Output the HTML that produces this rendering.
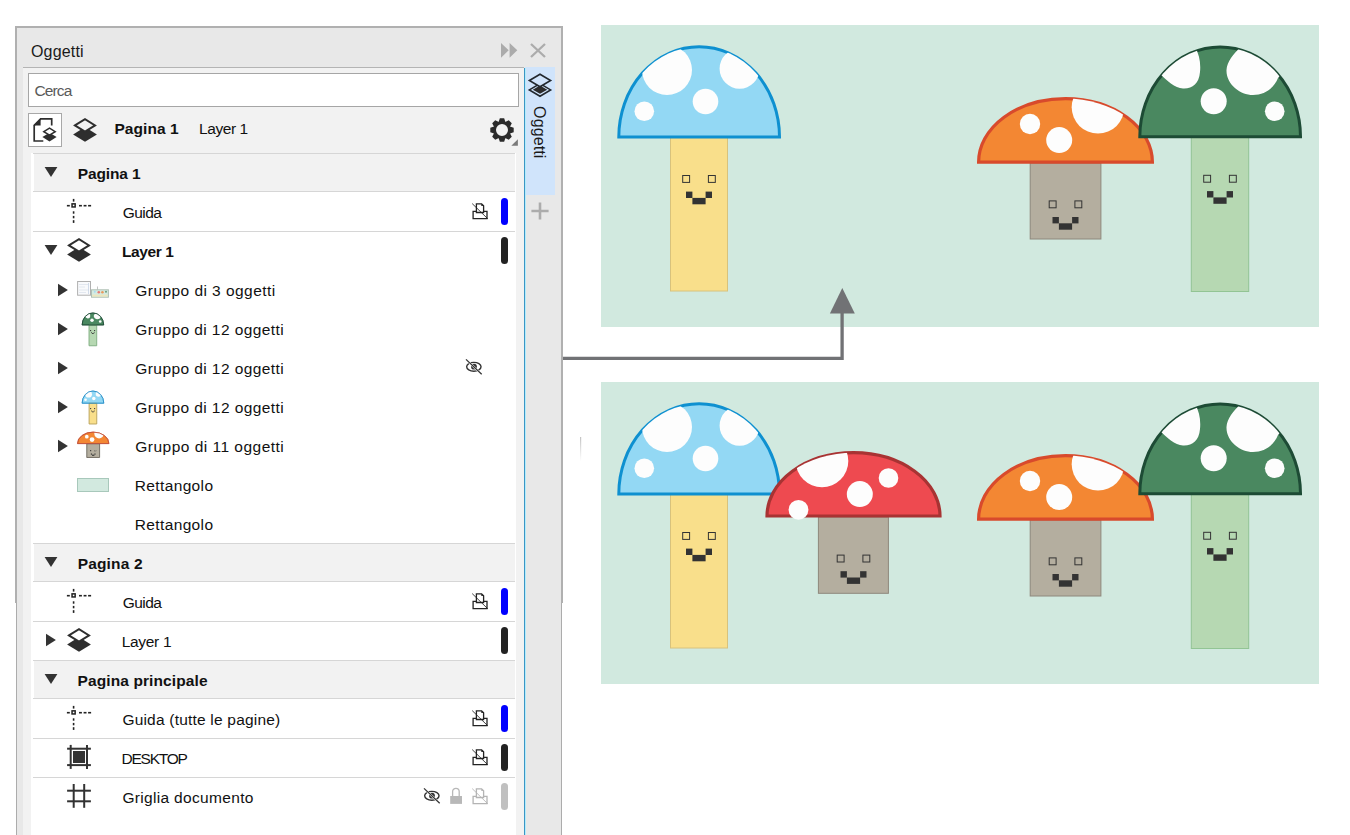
<!DOCTYPE html>
<html><head><meta charset="utf-8"><style>
html,body{margin:0;padding:0}
body{width:1350px;height:835px;position:relative;overflow:hidden;background:#fff;font-family:'Liberation Sans', sans-serif}
</style></head><body>
<svg width="1350" height="835" viewBox="0 0 1350 835" style="position:absolute;left:0;top:0">
<defs><clipPath id="cb"><path d="M618.80 136.90 A80.35 90.30 0 0 1 779.50 136.90 Z"/></clipPath>
<clipPath id="cg"><path d="M1139.80 136.70 A80.35 89.80 0 0 1 1300.50 136.70 Z"/></clipPath>
<clipPath id="co"><path d="M978.60 162.20 A86.90 63.60 0 0 1 1152.40 162.20 Z"/></clipPath>
<clipPath id="cr"><path d="M767.00 516.00 A86.50 63.30 0 0 1 940.00 516.00 Z"/></clipPath></defs>
<rect x="601" y="25" width="718" height="302" fill="#d1e9df"/>
<rect x="601" y="382" width="718" height="302" fill="#d1e9df"/>
<g id="mb"><rect x="670.5" y="137.5" width="57" height="153.5" fill="#f9df8b" stroke="#d8c27c" stroke-width="1"/>
<path d="M618.80 136.90 A80.35 90.30 0 0 1 779.50 136.90 Z" fill="#93d8f4" stroke="#0e90d0" stroke-width="3.0"/>
<g clip-path="url(#cb)" fill="#fdfdfd"><circle cx="667" cy="70" r="25"/><circle cx="739.6" cy="68.7" r="20"/></g>
<g fill="#fdfdfd"><circle cx="705.5" cy="101.5" r="12.8"/><circle cx="644.3" cy="111.2" r="9.8"/></g>
<g fill="none" stroke="#333" stroke-width="1"><rect x="682.7" y="175.5" width="6.9" height="6.9"/><rect x="708.4" y="175.5" width="6.9" height="6.9"/></g><g fill="#333"><rect x="686.0" y="191.6" width="6.4" height="6.4"/><rect x="705.6" y="191.6" width="6.4" height="6.4"/><rect x="692.4" y="197.9" width="13.2" height="6.4"/></g></g>
<g id="mo"><rect x="1030.2" y="163" width="70.7" height="76" fill="#b4ae9f" stroke="#8e887c" stroke-width="1"/>
<path d="M978.60 162.20 A86.90 63.60 0 0 1 1152.40 162.20 Z" fill="#f38733" stroke="#d84a2c" stroke-width="3.2"/>
<g clip-path="url(#co)" fill="#fdfdfd"><circle cx="1098" cy="107.3" r="26.3"/></g>
<g fill="#fdfdfd"><circle cx="1030" cy="124" r="10.2"/><circle cx="1059.2" cy="140.1" r="13"/></g>
<g fill="none" stroke="#333" stroke-width="1"><rect x="1049.2" y="200.9" width="6.9" height="6.9"/><rect x="1074.9" y="200.9" width="6.9" height="6.9"/></g><g fill="#333"><rect x="1052.5" y="217.0" width="6.4" height="6.4"/><rect x="1072.1" y="217.0" width="6.4" height="6.4"/><rect x="1058.9" y="223.3" width="13.2" height="6.4"/></g></g>
<g id="mg"><rect x="1191.3" y="137.5" width="57.4" height="154" fill="#b6d8b2" stroke="#92c494" stroke-width="1"/>
<path d="M1139.80 136.70 A80.35 89.80 0 0 1 1300.50 136.70 Z" fill="#4a8860" stroke="#1d4b35" stroke-width="3.0"/>
<g clip-path="url(#cg)" fill="#fdfdfd"><path d="M1193 44 C1199 52 1201 62 1200 72 C1199 84 1192 89 1183 88.5 C1175 88 1167 81 1158 72 L1170 44 Z"/><path d="M1243 44 C1236 52 1227 60 1226.5 70 C1226 84 1240 95 1253 95 C1265 95 1274 88 1278 78 L1285 70 L1250 40 Z"/></g>
<g fill="#fdfdfd"><circle cx="1213.7" cy="101.3" r="13"/><circle cx="1274.7" cy="111.2" r="9.8"/></g>
<g fill="none" stroke="#333" stroke-width="1"><rect x="1203.7" y="175.3" width="6.9" height="6.9"/><rect x="1229.4" y="175.3" width="6.9" height="6.9"/></g><g fill="#333"><rect x="1207.0" y="191.1" width="6.4" height="6.4"/><rect x="1226.6" y="191.1" width="6.4" height="6.4"/><rect x="1213.4" y="197.4" width="13.2" height="6.4"/></g></g>
<g transform="translate(0,357)"><use href="#mb"/><use href="#mo"/><use href="#mg"/></g>
<g id="mr"><rect x="818.4" y="517" width="70" height="76.3" fill="#b4ae9f" stroke="#8e887c" stroke-width="1"/>
<path d="M767.00 516.00 A86.50 63.30 0 0 1 940.00 516.00 Z" fill="#ee4a50" stroke="#a83333" stroke-width="3.2"/>
<g clip-path="url(#cr)" fill="#fdfdfd"><circle cx="822" cy="461" r="26.3"/></g>
<g fill="#fdfdfd"><circle cx="888.5" cy="478" r="9.8"/><circle cx="859.8" cy="494.1" r="13"/><circle cx="798.5" cy="509.8" r="9.9"/></g>
<g fill="none" stroke="#333" stroke-width="1"><rect x="837.2" y="555.1" width="6.9" height="6.9"/><rect x="862.9" y="555.1" width="6.9" height="6.9"/></g><g fill="#333"><rect x="840.5" y="571.2" width="6.4" height="6.4"/><rect x="860.1" y="571.2" width="6.4" height="6.4"/><rect x="846.9" y="577.5" width="13.2" height="6.4"/></g></g>
<path d="M562 358.4 H842.1 V312" fill="none" stroke="#717275" stroke-width="3.3"/>
<path d="M829.9 313.5 L842.3 288 L854.8 313.5 Z" fill="#717275"/>
<defs><linearGradient id="fl" x1="0" y1="0" x2="0" y2="1"><stop offset="0" stop-color="#c4c4c4"/><stop offset="1" stop-color="#ffffff"/></linearGradient></defs><rect x="580" y="437" width="1.2" height="24" fill="url(#fl)"/>
</svg>
<div style="position:absolute;left:15px;top:26px;width:548px;height:577px;box-sizing:border-box;border:2px solid #b0b0b0;border-bottom:none;background:#e8e8e8"></div><div style="position:absolute;left:16px;top:603px;width:546px;height:232px;box-sizing:border-box;border-left:1px solid #acacac;border-right:1px solid #acacac;background:#e8e8e8"></div><div style="position:absolute;left:31.0px;top:43.66px;font:400 16px/16px 'Liberation Sans', sans-serif;letter-spacing:0.161px;color:#1a1a1a;white-space:nowrap">Oggetti</div><svg style="position:absolute;left:498px;top:38px" width="52" height="24" viewBox="498 38 52 24">
<path d="M501 42.9 L508.7 50.3 L501 57.8 Z M509.6 42.9 L517.3 50.3 L509.6 57.8 Z" fill="#ababab"/>
<path d="M531 44 L545 57 M545 44 L531 57" stroke="#acacac" stroke-width="2.3"/></svg><div style="position:absolute;left:23px;top:67px;width:501px;height:768px;background:#f2f2f2;border-top:1px solid #b4b4b4"></div><div style="position:absolute;left:28px;top:73px;width:491px;height:34px;box-sizing:border-box;background:#fff;border:1px solid #a6a6a6"></div><div style="position:absolute;left:34.4px;top:82.78px;font:400 15.5px/15.5px 'Liberation Sans', sans-serif;letter-spacing:-0.856px;color:#5a5a5a;white-space:nowrap">Cerca</div><div style="position:absolute;left:28px;top:113px;width:34px;height:34px;box-sizing:border-box;background:#fff;border:1px solid #a8a8a8"></div><svg style="position:absolute;left:28px;top:113px" width="72" height="34" viewBox="28 113 72 34">
<path d="M51.7 125.6 V118.9 H40.6 L34.2 125.3 V141 H43.3" fill="none" stroke="#2e2e2e" stroke-width="1.7"/>
<path d="M40.6 118.4 L40.6 125.6 L33.5 125.6 Z" fill="#2b2b2b"/>
<path d="M42.4 137.1 L49.5 132.7 L56.6 137.1 L49.5 141.5 Z" fill="#2e2e2e"/>
<path d="M43.8 131.7 L49.5 128.2 L55.2 131.7 L49.5 135.2 Z" fill="#fff" stroke="#2e2e2e" stroke-width="1.5" stroke-miterlimit="10"/>
<path d="M73.10 134.40 L85.00 127.10 L96.90 134.40 L85.00 141.70 Z" fill="#2e2e2e"/><path d="M74.90 125.40 L85.00 119.20 L95.10 125.40 L85.00 131.60 Z" fill="#f2f2f2" stroke="#2e2e2e" stroke-width="1.9" stroke-linejoin="miter" stroke-miterlimit="10"/>
</svg><div style="position:absolute;left:114.4px;top:121.18px;font:700 15.5px/15.5px 'Liberation Sans', sans-serif;letter-spacing:0.082px;color:#111;white-space:nowrap">Pagina 1</div><div style="position:absolute;left:199.1px;top:121.18px;font:400 15.5px/15.5px 'Liberation Sans', sans-serif;letter-spacing:-0.447px;color:#111;white-space:nowrap">Layer 1</div><svg style="position:absolute;left:484px;top:112px" width="36" height="36" viewBox="484 112 36 36">
<path d="M498.60 122.10 L499.85 118.30 L504.15 118.30 L505.40 122.10 L505.18 122.01 L508.76 120.20 L511.80 123.24 L509.99 126.82 L509.90 126.60 L513.70 127.85 L513.70 132.15 L509.90 133.40 L509.99 133.18 L511.80 136.76 L508.76 139.80 L505.18 137.99 L505.40 137.90 L504.15 141.70 L499.85 141.70 L498.60 137.90 L498.82 137.99 L495.24 139.80 L492.20 136.76 L494.01 133.18 L494.10 133.40 L490.30 132.15 L490.30 127.85 L494.10 126.60 L494.01 126.82 L492.20 123.24 L495.24 120.20 L498.82 122.01 Z M508 130 A6 6 0 1 0 496 130 A6 6 0 1 0 508 130 Z" fill="#2b2b2b" fill-rule="evenodd"/>
<path d="M511.3 145.7 L517.9 139.3 L517.9 145.7 Z" fill="#7a7a7a"/>
</svg><div style="position:absolute;left:31px;top:153px;width:485px;height:682px;background:#fff"></div><div style="position:absolute;left:524px;top:68px;width:1px;height:767px;background:#3b95c4"></div><div style="position:absolute;left:525px;top:67px;width:30px;height:128px;background:#d0e4fb"></div><div style="position:absolute;left:525px;top:68px;width:1px;height:767px;background:#b4ecfb"></div><svg style="position:absolute;left:525px;top:67px" width="30" height="40" viewBox="525 67 30 40">
<path d="M529.4 89.9 L540 83.6 L550.6 89.9 L540 96.2 Z" fill="#d0e4fb" stroke="#22282e" stroke-width="1.6"/>
<path d="M532.8 89.7 L540 85.6 L547.2 89.7 L540 93.8 Z" fill="#2b2b2b"/>
<path d="M529.4 80.5 L540 74.2 L550.6 80.5 L540 86.8 Z" fill="#d0e4fb" stroke="#22282e" stroke-width="1.6"/>
</svg><div style="position:absolute;left:529px;top:106.5px;width:52px;height:17px;transform-origin:0 0;transform:translate(18.8px,-0.9px) rotate(90deg);font:400 16px/17px 'Liberation Sans', sans-serif;letter-spacing:0.1px;color:#1a1a1a;white-space:nowrap">Oggetti</div><svg style="position:absolute;left:530px;top:201px" width="20" height="20" viewBox="530 201 20 20"><path d="M531.4 211 H548.6 M540 202.4 V219.6" stroke="#acacac" stroke-width="2.6"/></svg><div style="position:absolute;left:33px;top:153px;width:482px;height:1px;background:#d6d6d6"></div><div style="position:absolute;left:34px;top:154px;width:481px;height:37px;background:#f2f2f2"></div><svg style="position:absolute;left:42.5px;top:164.3px" width="16" height="16" viewBox="42.5 164.3 16 16"><path d="M44.1 167.3 L56.9 167.3 L50.5 177.3 Z" fill="#333"/></svg><div style="position:absolute;left:77.7px;top:165.78px;font:700 15.5px/15.5px 'Liberation Sans', sans-serif;letter-spacing:-0.133px;color:#111;white-space:nowrap">Pagina 1</div><div style="position:absolute;left:33px;top:191px;width:482px;height:1px;background:#d6d6d6"></div><svg style="position:absolute;left:60px;top:192px" width="40" height="38" viewBox="60 192 40 38">
<g fill="#222"><rect x="72.8" y="198.9" width="1.6" height="2.7"/><rect x="72.8" y="211.3" width="1.6" height="2.4"/><rect x="72.8" y="215.9" width="1.6" height="2.4"/><rect x="72.8" y="220.2" width="1.6" height="2.7"/><rect x="66.9" y="204.9" width="2.9" height="1.6"/><rect x="79" y="204.9" width="2.9" height="1.6"/><rect x="83.6" y="204.9" width="2.9" height="1.6"/><rect x="88.1" y="204.9" width="3.0" height="1.6"/></g>
<rect x="72.05" y="203.85" width="3.1" height="3.1" fill="#fff" stroke="#222" stroke-width="1.5"/>
</svg><div style="position:absolute;left:122.7px;top:204.78px;font:400 15.5px/15.5px 'Liberation Sans', sans-serif;letter-spacing:-0.535px;color:#111;white-space:nowrap">Guida</div><svg style="position:absolute;left:468px;top:192px" width="24" height="38" viewBox="468 192 24 38">
<g fill="none" stroke="#222" stroke-width="1.3" stroke-linejoin="miter">
<path d="M476.4 212.5 V203.8 H481.6 L483.6 205.8 V212.5 Z"/>
<path d="M476.4 211.4 H473.1 V218.6 H487 V211.4 H483.6"/>
</g>
<path d="M481.3 203.8 L483.6 206.1 L481.3 206.1 Z" fill="#222"/>
<line x1="472.2" y1="203.6" x2="487.8" y2="218.8" stroke="#222" stroke-width="1" opacity="0.85"/>
</svg><div style="position:absolute;left:501px;top:197.9px;width:7px;height:27px;border-radius:3.5px;background:#0000ff"></div><div style="position:absolute;left:33px;top:231px;width:482px;height:1px;background:#d6d6d6"></div><svg style="position:absolute;left:42.5px;top:242.3px" width="16" height="16" viewBox="42.5 242.3 16 16"><path d="M44.1 245.3 L56.9 245.3 L50.5 255.3 Z" fill="#333"/></svg><svg style="position:absolute;left:64px;top:231px" width="30" height="38" viewBox="64 231 30 38"><path d="M67.10 254.40 L79.00 247.10 L90.90 254.40 L79.00 261.70 Z" fill="#2e2e2e"/><path d="M68.90 245.40 L79.00 239.20 L89.10 245.40 L79.00 251.60 Z" fill="#fff" stroke="#2e2e2e" stroke-width="1.9" stroke-linejoin="miter" stroke-miterlimit="10"/></svg><div style="position:absolute;left:122.0px;top:243.78px;font:700 15.5px/15.5px 'Liberation Sans', sans-serif;letter-spacing:-0.395px;color:#111;white-space:nowrap">Layer 1</div><div style="position:absolute;left:501px;top:236.9px;width:7px;height:27px;border-radius:3.5px;background:#222"></div><svg style="position:absolute;left:55.2px;top:281.5px" width="16" height="16" viewBox="55.2 281.5 16 16"><path d="M58.2 283.2 L68.10000000000001 289.5 L58.2 295.8 Z" fill="#333"/></svg><svg style="position:absolute;left:74px;top:278px" width="40" height="24" viewBox="74 278 40 24">
<rect x="77.6" y="281.5" width="12.9" height="13.7" fill="#f9fafc" stroke="#b0b0b0" stroke-width="1"/>
<g stroke="#dde3ec" stroke-width="0.8"><line x1="79" y1="284.5" x2="88" y2="284.5"/><line x1="79" y1="287" x2="85" y2="287"/><line x1="79" y1="290" x2="89" y2="290"/><line x1="79" y1="292.5" x2="86" y2="292.5"/></g>
<line x1="88.5" y1="283" x2="88.5" y2="294" stroke="#c8d4e4" stroke-width="0.8"/>
<rect x="91.5" y="289.8" width="16.9" height="7.4" fill="#d6ebe1" stroke="#aebfb4" stroke-width="1"/>
<rect x="92.2" y="294.6" width="15.5" height="2" fill="#ece6bd"/>
<circle cx="94.8" cy="291.8" r="1" fill="#a9dcf0"/><circle cx="98.8" cy="292.2" r="1.3" fill="#e77a74"/><circle cx="102.4" cy="292.2" r="1.3" fill="#eb9a5c"/><circle cx="106" cy="291.8" r="1" fill="#6a9c7c"/>
<line x1="97.5" y1="286.5" x2="97.5" y2="289.5" stroke="#aaa" stroke-width="0.7"/>
</svg><div style="position:absolute;left:135.3px;top:282.78px;font:400 15.5px/15.5px 'Liberation Sans', sans-serif;letter-spacing:0.445px;color:#111;white-space:nowrap">Gruppo di 3 oggetti</div><svg style="position:absolute;left:55.2px;top:320.5px" width="16" height="16" viewBox="55.2 320.5 16 16"><path d="M58.2 322.2 L68.10000000000001 328.5 L58.2 334.8 Z" fill="#333"/></svg><svg style="position:absolute;left:0;top:0" width="120" height="835" viewBox="0 0 120 835"><g transform="translate(-71.079,306.599) scale(0.13439)"><use href="#mg"/><g fill="none" vector-effect="non-scaling-stroke"><rect x="1191.3" y="137.5" width="57.4" height="154" stroke="#7fae82" stroke-width="0.9" vector-effect="non-scaling-stroke"/><path d="M1139.65 136.85 A80.50 90.10 0 0 1 1300.65 136.85 Z" stroke="#1d4b35" stroke-width="0.9" vector-effect="non-scaling-stroke"/></g></g></svg><div style="position:absolute;left:135.3px;top:321.78px;font:400 15.5px/15.5px 'Liberation Sans', sans-serif;letter-spacing:0.42px;color:#111;white-space:nowrap">Gruppo di 12 oggetti</div><svg style="position:absolute;left:55.2px;top:359.5px" width="16" height="16" viewBox="55.2 359.5 16 16"><path d="M58.2 361.2 L68.10000000000001 367.5 L58.2 373.8 Z" fill="#333"/></svg><div style="position:absolute;left:135.3px;top:360.78px;font:400 15.5px/15.5px 'Liberation Sans', sans-serif;letter-spacing:0.42px;color:#111;white-space:nowrap">Gruppo di 12 oggetti</div><svg style="position:absolute;left:462.1px;top:348px" width="26" height="38" viewBox="462.1 348 26 38">
<ellipse cx="473.95000000000005" cy="366.8" rx="7.2" ry="4.4" fill="none" stroke="#333" stroke-width="1.4"/>
<circle cx="474.1" cy="366.7" r="2.9" fill="#333"/>
<line x1="466.1" y1="359.4" x2="481.8" y2="374.3" stroke="#fff" stroke-width="2.1"/>
<line x1="466.1" y1="359.4" x2="481.8" y2="374.3" stroke="#333" stroke-width="1.3"/>
</svg><svg style="position:absolute;left:55.2px;top:398.5px" width="16" height="16" viewBox="55.2 398.5 16 16"><path d="M58.2 400.2 L68.10000000000001 406.5 L58.2 412.8 Z" fill="#333"/></svg><svg style="position:absolute;left:0;top:0" width="120" height="835" viewBox="0 0 120 835"><g transform="translate(-1.437,384.711) scale(0.13500)"><use href="#mb"/><g fill="none"><rect x="670.5" y="137.5" width="57" height="153.5" stroke="#b9a35e" stroke-width="0.9" vector-effect="non-scaling-stroke"/><path d="M618.65 137.05 A80.50 90.60 0 0 1 779.65 137.05 Z" stroke="#2a8fc7" stroke-width="0.9" vector-effect="non-scaling-stroke"/></g></g></svg><div style="position:absolute;left:135.3px;top:399.78px;font:400 15.5px/15.5px 'Liberation Sans', sans-serif;letter-spacing:0.42px;color:#111;white-space:nowrap">Gruppo di 12 oggetti</div><svg style="position:absolute;left:55.2px;top:437.5px" width="16" height="16" viewBox="55.2 437.5 16 16"><path d="M58.2 439.2 L68.10000000000001 445.5 L58.2 451.8 Z" fill="#333"/></svg><svg style="position:absolute;left:0;top:0" width="120" height="835" viewBox="0 0 120 835"><g transform="translate(-99.433,414.263) scale(0.18079)"><use href="#mo"/><g fill="none"><rect x="1030.2" y="163" width="70.7" height="76" stroke="#6f6a60" stroke-width="0.9" vector-effect="non-scaling-stroke"/><path d="M978.60 162.20 A86.90 63.60 0 0 1 1152.40 162.20 Z" stroke="#c0503a" stroke-width="0.9" vector-effect="non-scaling-stroke"/></g></g></svg><div style="position:absolute;left:135.3px;top:438.78px;font:400 15.5px/15.5px 'Liberation Sans', sans-serif;letter-spacing:0.481px;color:#111;white-space:nowrap">Gruppo di 11 oggetti</div><div style="position:absolute;left:77px;top:478px;width:30px;height:12px;background:#d2e9df;border:1px solid #a8c8bb"></div><div style="position:absolute;left:134.8px;top:477.78px;font:400 15.5px/15.5px 'Liberation Sans', sans-serif;letter-spacing:0.361px;color:#111;white-space:nowrap">Rettangolo</div><div style="position:absolute;left:134.8px;top:516.78px;font:400 15.5px/15.5px 'Liberation Sans', sans-serif;letter-spacing:0.361px;color:#111;white-space:nowrap">Rettangolo</div><div style="position:absolute;left:33px;top:543px;width:482px;height:1px;background:#d6d6d6"></div><div style="position:absolute;left:34px;top:544px;width:481px;height:37px;background:#f2f2f2"></div><svg style="position:absolute;left:42.5px;top:554.3px" width="16" height="16" viewBox="42.5 554.3 16 16"><path d="M44.1 557.3 L56.9 557.3 L50.5 567.3 Z" fill="#333"/></svg><div style="position:absolute;left:77.7px;top:555.78px;font:700 15.5px/15.5px 'Liberation Sans', sans-serif;letter-spacing:0.167px;color:#111;white-space:nowrap">Pagina 2</div><div style="position:absolute;left:33px;top:581px;width:482px;height:1px;background:#d6d6d6"></div><svg style="position:absolute;left:60px;top:582px" width="40" height="38" viewBox="60 582 40 38">
<g fill="#222"><rect x="72.8" y="588.9" width="1.6" height="2.7"/><rect x="72.8" y="601.3" width="1.6" height="2.4"/><rect x="72.8" y="605.9" width="1.6" height="2.4"/><rect x="72.8" y="610.2" width="1.6" height="2.7"/><rect x="66.9" y="594.9" width="2.9" height="1.6"/><rect x="79" y="594.9" width="2.9" height="1.6"/><rect x="83.6" y="594.9" width="2.9" height="1.6"/><rect x="88.1" y="594.9" width="3.0" height="1.6"/></g>
<rect x="72.05" y="593.85" width="3.1" height="3.1" fill="#fff" stroke="#222" stroke-width="1.5"/>
</svg><div style="position:absolute;left:122.7px;top:594.78px;font:400 15.5px/15.5px 'Liberation Sans', sans-serif;letter-spacing:-0.535px;color:#111;white-space:nowrap">Guida</div><svg style="position:absolute;left:468px;top:582px" width="24" height="38" viewBox="468 582 24 38">
<g fill="none" stroke="#222" stroke-width="1.3" stroke-linejoin="miter">
<path d="M476.4 602.5 V593.8 H481.6 L483.6 595.8 V602.5 Z"/>
<path d="M476.4 601.4 H473.1 V608.6 H487 V601.4 H483.6"/>
</g>
<path d="M481.3 593.8 L483.6 596.1 L481.3 596.1 Z" fill="#222"/>
<line x1="472.2" y1="593.6" x2="487.8" y2="608.8" stroke="#222" stroke-width="1" opacity="0.85"/>
</svg><div style="position:absolute;left:501px;top:587.9px;width:7px;height:27px;border-radius:3.5px;background:#0000ff"></div><div style="position:absolute;left:33px;top:621px;width:482px;height:1px;background:#d6d6d6"></div><svg style="position:absolute;left:42.5px;top:632.3px" width="16" height="16" viewBox="42.5 632.3 16 16"><path d="M45.5 634.0 L55.4 640.3 L45.5 646.5999999999999 Z" fill="#333"/></svg><svg style="position:absolute;left:64px;top:621px" width="30" height="38" viewBox="64 621 30 38"><path d="M67.10 644.40 L79.00 637.10 L90.90 644.40 L79.00 651.70 Z" fill="#2e2e2e"/><path d="M68.90 635.40 L79.00 629.20 L89.10 635.40 L79.00 641.60 Z" fill="#fff" stroke="#2e2e2e" stroke-width="1.9" stroke-linejoin="miter" stroke-miterlimit="10"/></svg><div style="position:absolute;left:121.7px;top:633.78px;font:400 15.5px/15.5px 'Liberation Sans', sans-serif;letter-spacing:-0.297px;color:#111;white-space:nowrap">Layer 1</div><div style="position:absolute;left:501px;top:626.9px;width:7px;height:27px;border-radius:3.5px;background:#222"></div><div style="position:absolute;left:33px;top:660px;width:482px;height:1px;background:#d6d6d6"></div><div style="position:absolute;left:34px;top:661px;width:481px;height:37px;background:#f2f2f2"></div><svg style="position:absolute;left:42.5px;top:671.3px" width="16" height="16" viewBox="42.5 671.3 16 16"><path d="M44.1 674.3 L56.9 674.3 L50.5 684.3 Z" fill="#333"/></svg><div style="position:absolute;left:77.6px;top:672.78px;font:700 15.5px/15.5px 'Liberation Sans', sans-serif;letter-spacing:0.099px;color:#111;white-space:nowrap">Pagina principale</div><div style="position:absolute;left:33px;top:698px;width:482px;height:1px;background:#d6d6d6"></div><svg style="position:absolute;left:60px;top:699px" width="40" height="38" viewBox="60 699 40 38">
<g fill="#222"><rect x="72.8" y="705.9" width="1.6" height="2.7"/><rect x="72.8" y="718.3" width="1.6" height="2.4"/><rect x="72.8" y="722.9" width="1.6" height="2.4"/><rect x="72.8" y="727.2" width="1.6" height="2.7"/><rect x="66.9" y="711.9" width="2.9" height="1.6"/><rect x="79" y="711.9" width="2.9" height="1.6"/><rect x="83.6" y="711.9" width="2.9" height="1.6"/><rect x="88.1" y="711.9" width="3.0" height="1.6"/></g>
<rect x="72.05" y="710.85" width="3.1" height="3.1" fill="#fff" stroke="#222" stroke-width="1.5"/>
</svg><div style="position:absolute;left:122.4px;top:711.78px;font:400 15.5px/15.5px 'Liberation Sans', sans-serif;letter-spacing:0.204px;color:#111;white-space:nowrap">Guida (tutte le pagine)</div><svg style="position:absolute;left:468px;top:699px" width="24" height="38" viewBox="468 699 24 38">
<g fill="none" stroke="#222" stroke-width="1.3" stroke-linejoin="miter">
<path d="M476.4 719.5 V710.8 H481.6 L483.6 712.8 V719.5 Z"/>
<path d="M476.4 718.4 H473.1 V725.6 H487 V718.4 H483.6"/>
</g>
<path d="M481.3 710.8 L483.6 713.1 L481.3 713.1 Z" fill="#222"/>
<line x1="472.2" y1="710.6" x2="487.8" y2="725.8" stroke="#222" stroke-width="1" opacity="0.85"/>
</svg><div style="position:absolute;left:501px;top:704.9px;width:7px;height:27px;border-radius:3.5px;background:#0000ff"></div><div style="position:absolute;left:33px;top:738px;width:482px;height:1px;background:#d6d6d6"></div><svg style="position:absolute;left:60px;top:738px" width="40" height="38" viewBox="60 738 40 38">
<g stroke="#333" stroke-width="2" fill="none">
<line x1="67.1" y1="748.7" x2="90.9" y2="748.7"/><line x1="67.1" y1="765.1" x2="90.9" y2="765.1"/>
<line x1="70.7" y1="744.9" x2="70.7" y2="768.9"/><line x1="87" y1="744.9" x2="87" y2="768.9"/>
</g><rect x="73" y="751" width="12" height="12" fill="#333"/></svg><div style="position:absolute;left:121.4px;top:750.78px;font:400 15.5px/15.5px 'Liberation Sans', sans-serif;letter-spacing:-1.209px;color:#111;white-space:nowrap">DESKTOP</div><svg style="position:absolute;left:468px;top:738px" width="24" height="38" viewBox="468 738 24 38">
<g fill="none" stroke="#222" stroke-width="1.3" stroke-linejoin="miter">
<path d="M476.4 758.5 V749.8 H481.6 L483.6 751.8 V758.5 Z"/>
<path d="M476.4 757.4 H473.1 V764.6 H487 V757.4 H483.6"/>
</g>
<path d="M481.3 749.8 L483.6 752.1 L481.3 752.1 Z" fill="#222"/>
<line x1="472.2" y1="749.6" x2="487.8" y2="764.8" stroke="#222" stroke-width="1" opacity="0.85"/>
</svg><div style="position:absolute;left:501px;top:743.9px;width:7px;height:27px;border-radius:3.5px;background:#222"></div><div style="position:absolute;left:33px;top:777px;width:482px;height:1px;background:#d6d6d6"></div><svg style="position:absolute;left:60px;top:777px" width="40" height="38" viewBox="60 777 40 38">
<g stroke="#333" stroke-width="2" fill="none">
<line x1="67.1" y1="790.7" x2="90.9" y2="790.7"/><line x1="67.1" y1="801.3" x2="90.9" y2="801.3"/>
<line x1="73.7" y1="784" x2="73.7" y2="807.8"/><line x1="84.2" y1="784" x2="84.2" y2="807.8"/>
</g></svg><div style="position:absolute;left:122.4px;top:789.78px;font:400 15.5px/15.5px 'Liberation Sans', sans-serif;letter-spacing:0.327px;color:#111;white-space:nowrap">Griglia documento</div><svg style="position:absolute;left:468px;top:777px" width="24" height="38" viewBox="468 777 24 38">
<g fill="none" stroke="#b4b4b4" stroke-width="1.3" stroke-linejoin="miter">
<path d="M476.4 797.5 V788.8 H481.6 L483.6 790.8 V797.5 Z"/>
<path d="M476.4 796.4 H473.1 V803.6 H487 V796.4 H483.6"/>
</g>
<path d="M481.3 788.8 L483.6 791.1 L481.3 791.1 Z" fill="#b4b4b4"/>
<line x1="472.2" y1="788.6" x2="487.8" y2="803.8" stroke="#b4b4b4" stroke-width="1" opacity="0.85"/>
</svg><svg style="position:absolute;left:420px;top:777px" width="26" height="38" viewBox="420 777 26 38">
<ellipse cx="431.85" cy="795.8" rx="7.2" ry="4.4" fill="none" stroke="#333" stroke-width="1.4"/>
<circle cx="432" cy="795.7" r="2.9" fill="#333"/>
<line x1="424" y1="788.4" x2="439.7" y2="803.3" stroke="#fff" stroke-width="2.1"/>
<line x1="424" y1="788.4" x2="439.7" y2="803.3" stroke="#333" stroke-width="1.3"/>
</svg><svg style="position:absolute;left:448px;top:777px" width="16" height="38" viewBox="448 777 16 38">
<path d="M452.6 796 V791.6 A3.3 3.3 0 0 1 459.2 791.6 V796" fill="none" stroke="#b8b8b8" stroke-width="1.3"/>
<rect x="450.2" y="796" width="11.8" height="7.9" fill="#b8b8b8"/></svg><div style="position:absolute;left:501px;top:782.9px;width:7px;height:27px;border-radius:3.5px;background:#c0c0c0"></div>
</body></html>
